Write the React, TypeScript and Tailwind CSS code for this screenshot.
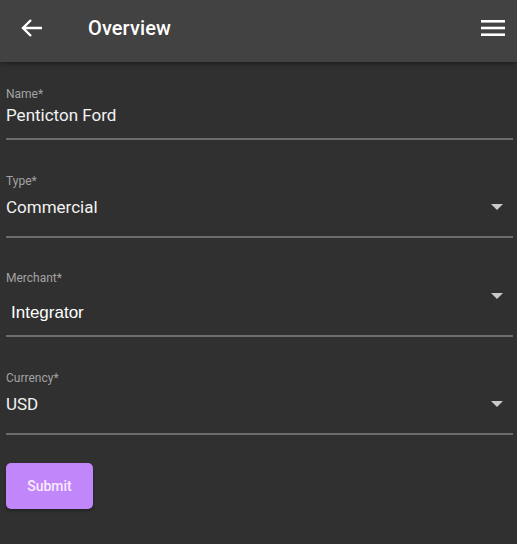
import React from 'react';

const Caret = () => (
  <svg width="12" height="6" viewBox="0 0 12 6" className="shrink-0">
    <path d="M0 0 L12 0 L6 6 Z" fill="#c9c9c9" />
  </svg>
);

export default function App() {
  return (
    <div className="w-[517px] h-[544px] bg-[#303030] font-['Roboto',sans-serif] overflow-hidden">
      <header className="h-[62px] pb-[7px] bg-[#424242] flex items-center shadow-[0_2px_4px_rgba(0,0,0,0.35)] relative">
        <svg width="22" height="20" viewBox="0 0 22 20" className="ml-[21px]">
          <path d="M21 10 H2 M10 2 L2 10 L10 18" stroke="#fff" strokeWidth="2.4" fill="none" strokeLinecap="butt" />
        </svg>
        <span className="ml-[45px] text-white text-[20px] font-medium tracking-[0.1px]">Overview</span>
        <svg width="24" height="18" viewBox="0 0 24 18" className="ml-auto mr-[12px]">
          <rect x="0" y="1" width="24" height="2.6" fill="#fff" />
          <rect x="0" y="7.7" width="24" height="2.6" fill="#fff" />
          <rect x="0" y="14.4" width="24" height="2.6" fill="#fff" />
        </svg>
      </header>

      <main className="px-[6px] pr-[4px]">
        <div className="pt-[24px]">
          <div className="text-[12px] leading-[16px] text-[#a3a3a3]">Name*</div>
          <div className="mt-[3px] text-[17px] leading-[20px] text-[#f2f2f2]">Penticton Ford</div>
          <div className="mt-[13px] h-[2px] bg-[#6c6c6c]" />
        </div>

        <div className="pt-[33px]">
          <div className="text-[12px] leading-[16px] text-[#a3a3a3]">Type*</div>
          <div className="mt-[8px] flex items-center pr-[10px]">
            <span className="text-[17px] leading-[20px] text-[#f2f2f2]">Commercial</span>
            <span className="ml-auto"><Caret /></span>
          </div>
          <div className="mt-[19px] h-[2px] bg-[#6c6c6c]" />
        </div>

        <div className="pt-[32px]">
          <div className="text-[12px] leading-[16px] text-[#a3a3a3]">Merchant*</div>
          <div className="relative mt-[17px] flex items-center pr-[10px]">
            <span className="pl-[5px] text-[17px] leading-[20px] text-white font-['Liberation_Sans',sans-serif]">Integrator</span>
            <span className="absolute right-[10px] top-[-10px]"><Caret /></span>
          </div>
          <div className="mt-[12px] h-[2px] bg-[#6c6c6c]" />
        </div>

        <div className="pt-[33px]">
          <div className="text-[12px] leading-[16px] text-[#a3a3a3]">Currency*</div>
          <div className="mt-[8px] flex items-center pr-[10px]">
            <span className="text-[17px] leading-[20px] text-[#f2f2f2]">USD</span>
            <span className="ml-auto"><Caret /></span>
          </div>
          <div className="mt-[19px] h-[2px] bg-[#6c6c6c]" />
        </div>

        <button className="mt-[28px] w-[87px] h-[46px] rounded-[5px] bg-[#c286fb] text-[#f7ecff] text-[14px] font-medium shadow-[0_2px_3px_rgba(0,0,0,0.3)]">
          Submit
        </button>
      </main>
    </div>
  );
}
